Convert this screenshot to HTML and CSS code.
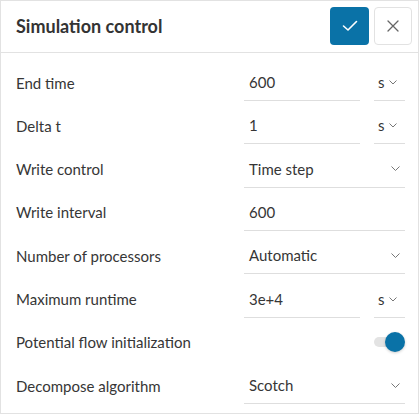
FILE: index.html
```html
<!DOCTYPE html>
<html>
<head>
<meta charset="utf-8">
<link rel="stylesheet" href="styles.css">
</head>
<body>
<div class="panel">
  <div class="header">
    <div class="title">Simulation control</div>
    <div class="actions">
      <button class="btn btn-ok" aria-label="Apply">
        <svg width="16" height="12" viewBox="0 0 16 12"><polyline points="1.5,6 6,10 14.5,1.5" fill="none" stroke="#fff" stroke-width="1.6" stroke-linecap="round" stroke-linejoin="round"/></svg>
      </button>
      <button class="btn btn-close" aria-label="Close">
        <svg width="12" height="12" viewBox="0 0 12 12"><path d="M1 1L11 11M11 1L1 11" stroke="#666" stroke-width="1.3" stroke-linecap="round"/></svg>
      </button>
    </div>
  </div>
  <div class="body">
    <div class="row">
      <div class="label">End time</div>
      <div class="control">
        <div class="field input">600</div>
        <div class="field unit">s<svg class="chev-s" width="8" height="5" viewBox="0 0 8 5"><polyline points="0.5,0.5 4,4 7.5,0.5" fill="none" stroke="#777" stroke-width="1"/></svg></div>
      </div>
    </div>
    <div class="row">
      <div class="label">Delta t</div>
      <div class="control">
        <div class="field input">1</div>
        <div class="field unit">s<svg class="chev-s" width="8" height="5" viewBox="0 0 8 5"><polyline points="0.5,0.5 4,4 7.5,0.5" fill="none" stroke="#777" stroke-width="1"/></svg></div>
      </div>
    </div>
    <div class="row">
      <div class="label">Write control</div>
      <div class="control">
        <div class="field select">Time step<svg width="9" height="5" viewBox="0 0 9 5"><polyline points="0.5,0.5 4.5,4.5 8.5,0.5" fill="none" stroke="#777" stroke-width="1"/></svg></div>
      </div>
    </div>
    <div class="row">
      <div class="label">Write interval</div>
      <div class="control">
        <div class="field input wide">600</div>
      </div>
    </div>
    <div class="row">
      <div class="label">Number of processors</div>
      <div class="control">
        <div class="field select">Automatic<svg width="9" height="5" viewBox="0 0 9 5"><polyline points="0.5,0.5 4.5,4.5 8.5,0.5" fill="none" stroke="#777" stroke-width="1"/></svg></div>
      </div>
    </div>
    <div class="row">
      <div class="label">Maximum runtime</div>
      <div class="control">
        <div class="field input">3e+4</div>
        <div class="field unit">s<svg class="chev-s" width="8" height="5" viewBox="0 0 8 5"><polyline points="0.5,0.5 4,4 7.5,0.5" fill="none" stroke="#777" stroke-width="1"/></svg></div>
      </div>
    </div>
    <div class="row">
      <div class="label">Potential flow initialization</div>
      <div class="control toggle-wrap">
        <div class="toggle"><div class="track"></div><div class="knob"></div></div>
      </div>
    </div>
    <div class="row">
      <div class="label">Decompose algorithm</div>
      <div class="control">
        <div class="field select">Scotch<svg width="9" height="5" viewBox="0 0 9 5"><polyline points="0.5,0.5 4.5,4.5 8.5,0.5" fill="none" stroke="#777" stroke-width="1"/></svg></div>
      </div>
    </div>
  </div>
</div>
</body>
</html>
```

FILE: styles.css
```css
* { box-sizing: border-box; }
html, body { margin: 0; padding: 0; background: #fff; }
body {
  font-family: Lato, "Noto Sans", sans-serif;
  color: #363636;
}
.panel {
  width: 419px;
  height: 414px;
  border: 1px solid #e2e2e2;
  background: #fff;
}
.header {
  height: 52px;
  border-bottom: 1px solid #e2e2e2;
  display: flex;
  align-items: center;
  justify-content: space-between;
  padding: 0 6px 1px 15px;
}
.title {
  font-size: 18px;
  font-weight: 700;
  color: #333;
}
.actions { display: flex; gap: 5px; }
.btn {
  width: 39px;
  height: 38px;
  border-radius: 4px;
  display: flex;
  align-items: center;
  justify-content: center;
  padding: 0;
  cursor: pointer;
}
.btn-ok { background: #0a72a7; border: none; }
.btn-close { background: #fff; border: 1px solid #e2e2e2; width: 38px; }
.body {
  padding: 11px 13px 0 15px;
  display: flex;
  flex-direction: column;
  gap: 6.33px;
}
.row {
  display: flex;
  align-items: center;
  height: 37px;
}
.label {
  width: 228px;
  font-size: 15px;
  color: #363636;
}
.control {
  flex: 1;
  display: flex;
  gap: 14px;
  height: 37px;
}
.field {
  height: 37px;
  border-bottom: 1px solid #dedede;
  font-size: 15px;
  color: #363636;
  display: flex;
  align-items: center;
}
.input { width: 116px; padding-left: 5px; }
.input.wide { width: 161px; }
.unit { width: 31px; padding-left: 4px; gap: 4px; }
.chev-s { margin-top: 1px; }
.select { flex: 1; padding-left: 5px; padding-right: 5px; justify-content: space-between; }
.toggle-wrap { justify-content: flex-end; align-items: center; }
.toggle { position: relative; width: 31px; height: 20px; }
.track {
  position: absolute;
  left: 0; top: 5px;
  width: 26px; height: 10px;
  border-radius: 5px;
  background: #e3e3e3;
}
.knob {
  position: absolute;
  right: 0; top: 0;
  width: 20px; height: 20px;
  border-radius: 50%;
  background: #0a72a7;
  box-shadow: 0 1px 3px rgba(0,0,0,0.2);
}
```
